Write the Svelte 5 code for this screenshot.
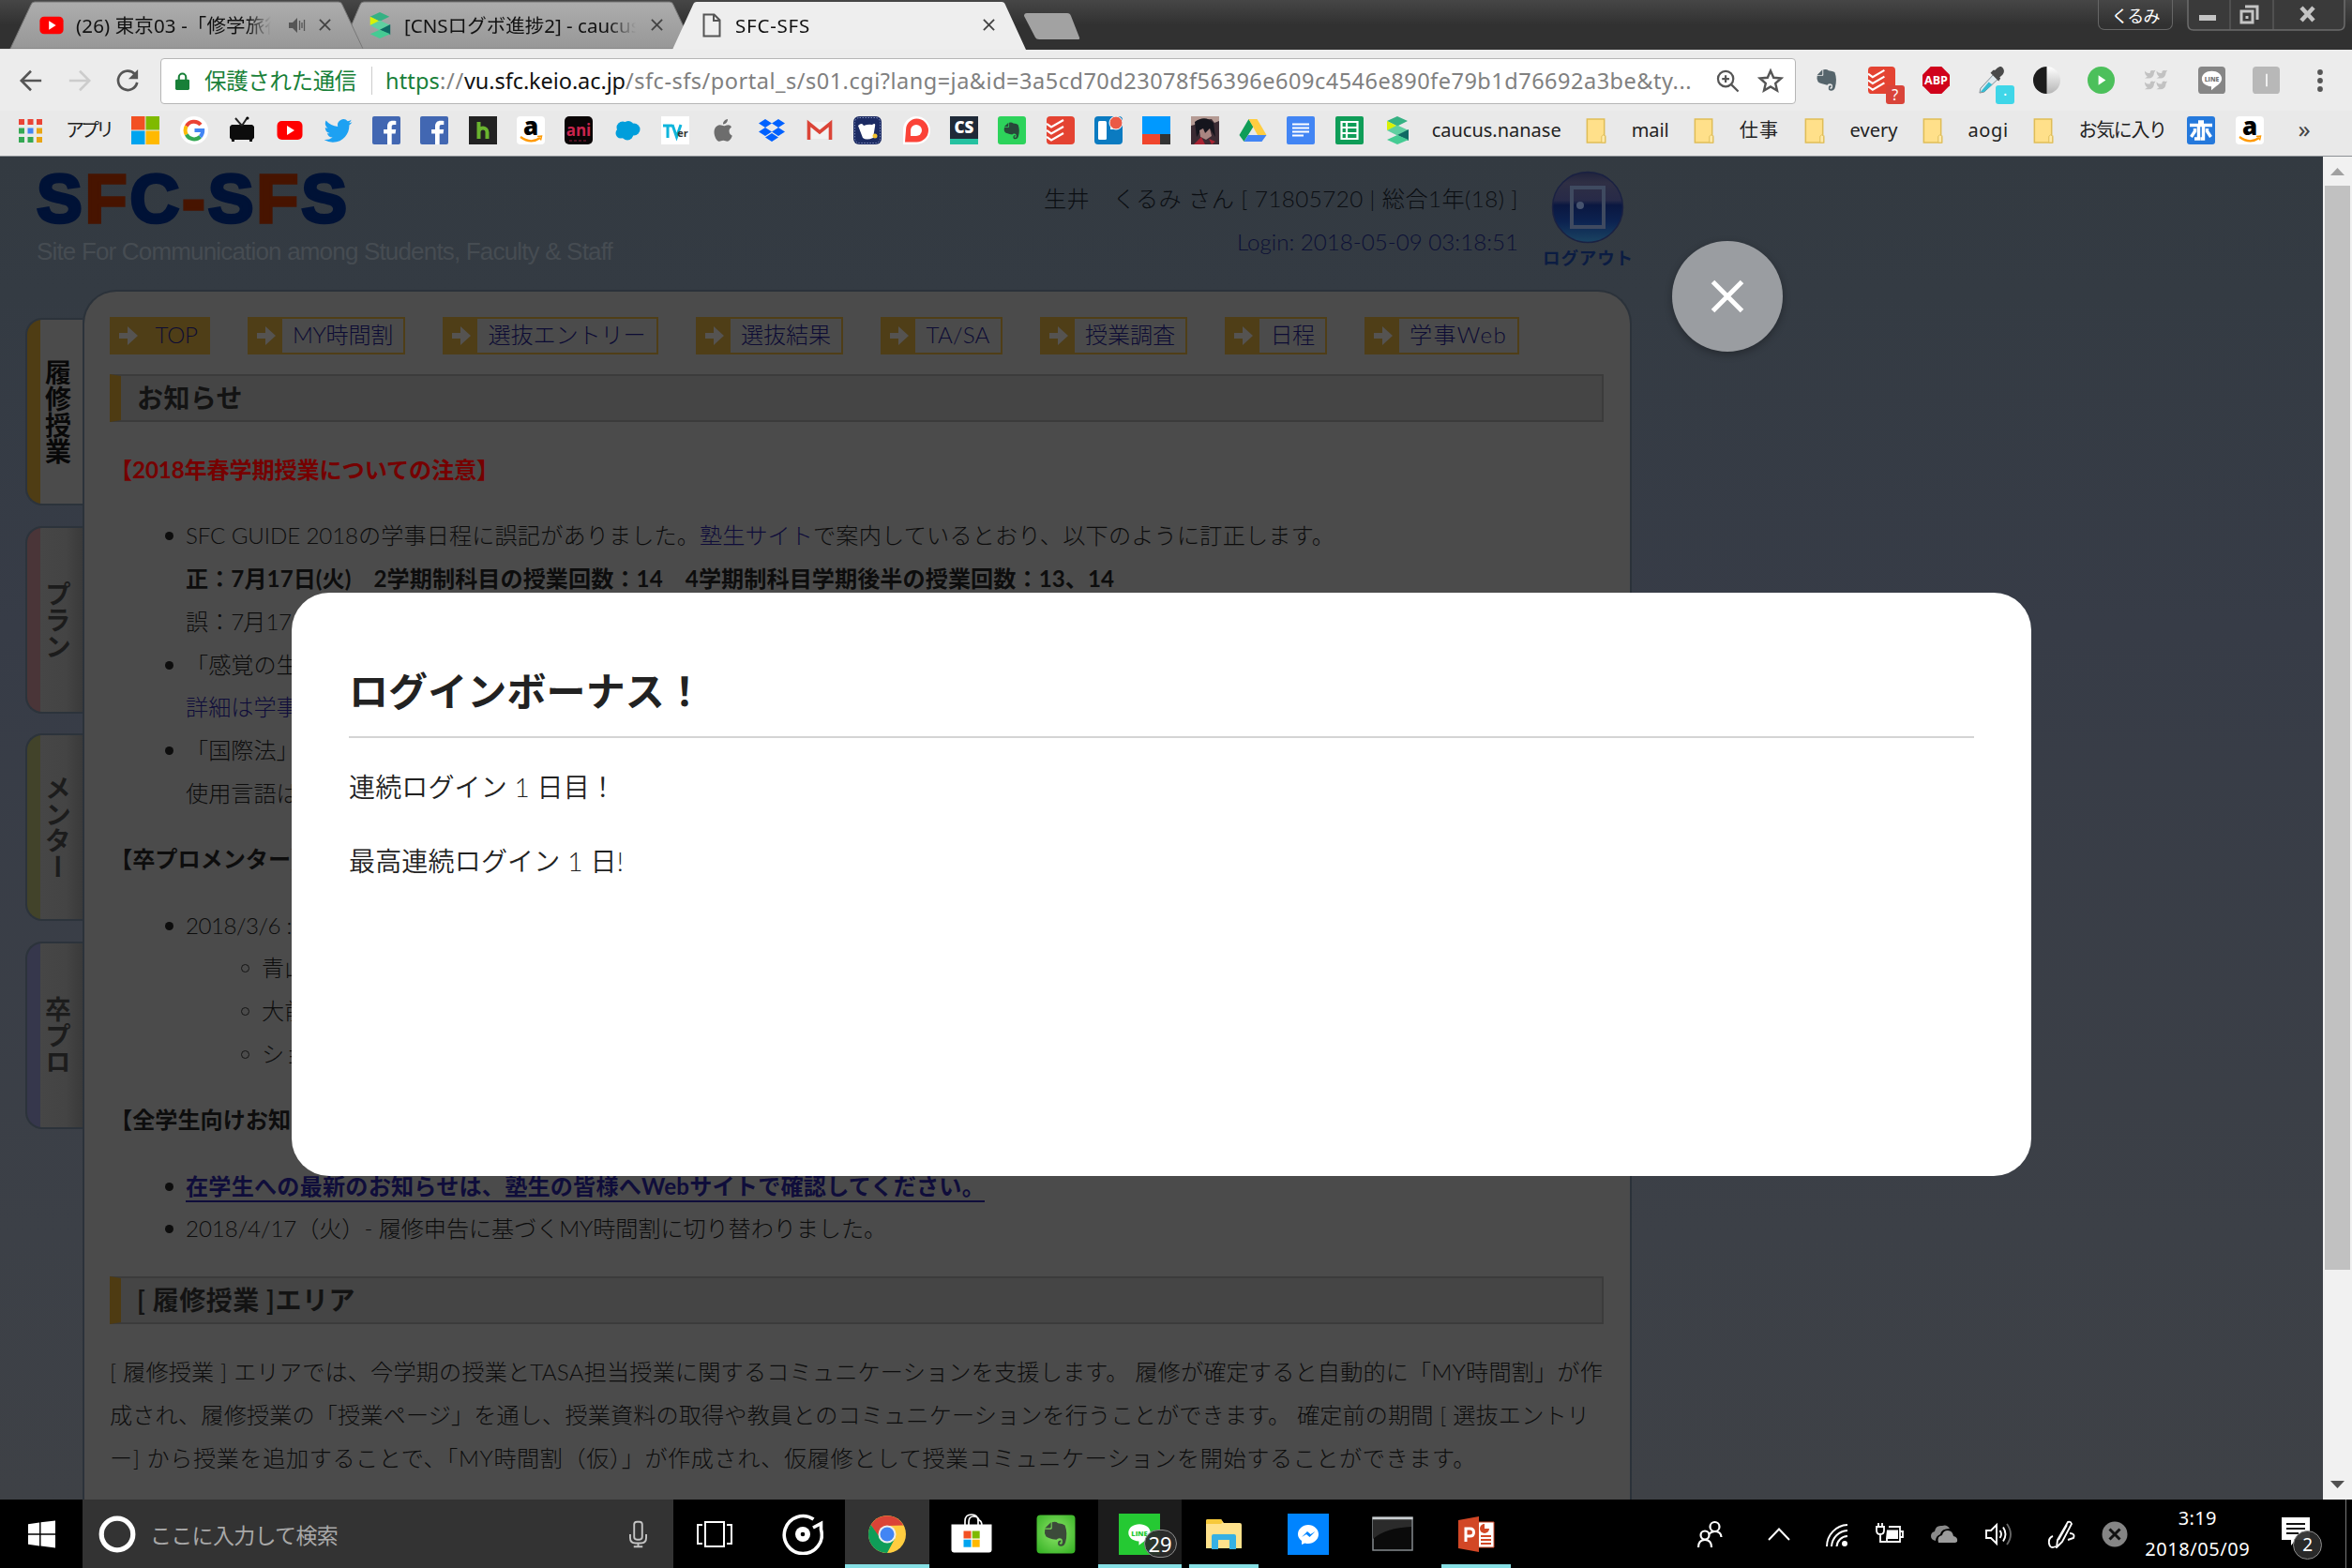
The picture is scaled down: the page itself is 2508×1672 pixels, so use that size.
<script>
  // Spreads the letters of a run so that it takes up the given width.
  function fit(node, width) {
    const natural = node.getBoundingClientRect().width;
    const count = [...node.textContent].length;
    node.style.letterSpacing = (width - natural) / count + 'px';
  }

  const bookmarkIcons = [
    'ms', 'google', 'tv', 'youtube', 'twitter', 'facebook', 'facebook', 'hatena', 'amazon', 'ani',
    'salesforce', 'tver', 'apple', 'dropbox', 'gmail', 'whale', 'pocket', 'cs', 'evernote', 'todoist',
    'trello', 'delicious', 'anime', 'drive', 'docs', 'sheets', 'scrap'
  ];
  // Lettering that sits on top of some of the icons, in icon units.
  const lettering = {
    amazon: { text: 'a', x: 15, y: 20, size: 26, weight: 800, fill: '#000' },
    ani: { text: 'ani', x: 15, y: 21, size: 17, weight: 700, fill: '#c9244e' },
    tver: { text: 'er', x: 23, y: 22, size: 11, weight: 700, fill: '#333' },
    cs: { text: 'CS', x: 15, y: 18, size: 17, weight: 800, fill: '#fff' },
    abp: { text: 'ABP', x: 15, y: 20, size: 13, weight: 700, fill: '#fff' },
    lineGrey: { text: 'LINE', x: 15, y: 16.5, size: 7, weight: 800, fill: '#777' },
    lineApp: { text: 'LINE', x: 22, y: 23.5, size: 7.5, weight: 800, fill: '#25c933' }
  };
  const folders = [
    { name: 'mail', width: 40 },
    { name: '仕事', width: 43 },
    { name: 'every', width: 51 },
    { name: 'aogi', width: 43 },
    { name: 'お気に入り', width: 93 }
  ];
  const extensions = ['elephant', 'todoist', 'abp', 'dropper', 'contrast', 'play', 'birds', 'lineGrey', 'bar'];
  const menu = [
    { name: 'TOP', width: 45, on: true },
    { name: 'MY時間割', width: 107 },
    { name: '選抜エントリー', width: 168 },
    { name: '選抜結果', width: 96 },
    { name: 'TA/SA', width: 68 },
    { name: '授業調査', width: 96 },
    { name: '日程', width: 47 },
    { name: '学事Web', width: 104 }
  ];
  const sideTabs = [
    { name: '履修授業', tone: 'gold' },
    { name: 'プラン', tone: 'pink' },
    { name: 'メンター', tone: 'olive' },
    { name: '卒プロ', tone: 'violet' }
  ];
  const apps = [
    { icon: 'groove' },
    { icon: 'chrome', state: 'active' },
    { icon: 'store' },
    { icon: 'evernoteBig' },
    { icon: 'lineApp', state: 'alert', badge: '29' },
    { icon: 'explorer', state: 'open' },
    { icon: 'messenger' },
    { icon: 'cmd' },
    { icon: 'ppt', state: 'open' }
  ];
  const tray = [
    { icon: 'people', width: 73 },
    { icon: 'chevron', width: 61.5 },
    { icon: 'wifi', width: 56.5 },
    { icon: 'battery', width: 58 },
    { icon: 'cloud', width: 59 },
    { icon: 'speaker', width: 66 },
    { icon: 'pen', width: 57 },
    { icon: 'stop', width: 47 }
  ];
</script>

{#snippet icon(name, box = 30)}
  <svg viewBox="0 0 {box} {box}">
    <use href="#{name}" />
    {#if lettering[name]}
      {@const l = lettering[name]}
      <text x={l.x} y={l.y} text-anchor="middle" font-family="Open Sans, sans-serif" font-weight={l.weight} font-size={l.size} fill={l.fill}>{l.text}</text>
    {/if}
  </svg>
{/snippet}

<svg class="defs" aria-hidden="true">
  <defs>
    <linearGradient id="gBall" x1="0" y1="0" x2="0" y2="1">
      <stop offset="0" stop-color="#20233d" /><stop offset=".15" stop-color="#2f2f44" /><stop offset=".4" stop-color="#272a48" />
      <stop offset=".47" stop-color="#0a1740" /><stop offset=".7" stop-color="#0c2250" /><stop offset="1" stop-color="#1a4462" />
    </linearGradient>
    <linearGradient id="gHalf" x1="0" y1="0" x2="0" y2="1">
      <stop offset="0" stop-color="#fff" /><stop offset="1" stop-color="#b5b5b5" />
    </linearGradient>
    <radialGradient id="gGreen" cx=".5" cy=".45" r=".75">
      <stop offset="0" stop-color="#8fe56a" /><stop offset="1" stop-color="#2fae1f" />
    </radialGradient>
  </defs>
  <symbol id="ms" viewBox="0 0 30 30"><path fill="#f25022" d="M0 0h14.500v14.500H0z" /><path fill="#7fba00" d="M15.500 0H30v14.500H15.500z" /><path fill="#00a4ef" d="M0 15.500h14.500V30H0z" /><path fill="#ffb900" d="M15.500 15.500H30V30H15.500z" /></symbol>
  <symbol id="google" viewBox="0 0 30 30"><circle cx="15" cy="15" r="15" fill="#fff" /><g fill="none" stroke-width="4"><path stroke="#ea4335" d="M22 9A9.300 9.300 0 0 0 6.800 10.500" /><path stroke="#fbbc05" d="M6.800 10.500a9.300 9.300 0 0 0 0 9" /><path stroke="#34a853" d="M6.800 19.500A9.300 9.300 0 0 0 21.500 21.700" /><path stroke="#4285f4" d="M21.500 21.700A9 9 0 0 0 24.200 15H15.500" /></g></symbol>
  <symbol id="tv" viewBox="0 0 30 30"><path d="M4 9h22l2 2v12l-2 2v2h-3v-2H7v2H4v-2l-2-2V11z" fill="#0c0c0c" /><path d="M15 10L8 2M15 10l6-9" stroke="#222" stroke-width="2" /><circle cx="21" cy="2" r="1.500" /></symbol>
  <symbol id="youtube" viewBox="0 0 30 30"><rect x="1.500" y="5" width="27" height="20" rx="5" fill="#f00" /><path d="M12 10l8 5-8 5z" fill="#fff" /></symbol>
  <symbol id="twitter" viewBox="0 0 24 24"><path fill="#1da1f2" d="M23.600 4.900a9.700 9.700 0 0 1-2.800.8 4.900 4.900 0 0 0 2.100-2.700c-.9.600-2 1-3.100 1.200a4.900 4.900 0 0 0-8.400 4.500A13.900 13.900 0 0 1 1.300 3.600a4.900 4.900 0 0 0 1.500 6.500c-.8 0-1.500-.2-2.200-.6v.1a4.900 4.900 0 0 0 3.900 4.800c-.7.200-1.500.2-2.200.1a4.900 4.900 0 0 0 4.600 3.400A9.900 9.900 0 0 1-.4 19.900a14 14 0 0 0 7.500 2.200c9.100 0 14-7.500 14-14v-.6c1-.7 1.800-1.600 2.500-2.600z" /></symbol>
  <symbol id="facebook" viewBox="0 0 30 30"><rect width="30" height="30" rx="2" fill="#4267b2" /><path fill="#fff" d="M20.700 30V18.500h3.900l.6-4.500h-4.500v-2.900c0-1.300.4-2.200 2.200-2.200h2.400v-4c-.4 0-1.800-.2-3.500-.2-3.500 0-5.800 2.100-5.800 6V14h-3.900v4.500H16V30z" /></symbol>
  <symbol id="hatena" viewBox="0 0 30 30"><rect width="30" height="30" fill="#222" /><path d="M10.500 6v18M10.500 17c0-6 9-6 9 0v7" fill="none" stroke="#6ab42f" stroke-width="4" /></symbol>
  <symbol id="amazon" viewBox="0 0 30 30"><rect width="30" height="30" rx="4" fill="#fff" /><path d="M4 22q11 8 21 1" fill="none" stroke="#f90" stroke-width="2.200" /><path d="M22 21.500l4.500-.5-1 4.500" fill="none" stroke="#f90" stroke-width="1.500" /></symbol>
  <symbol id="ani" viewBox="0 0 30 30"><rect width="30" height="30" rx="5" fill="#0a0506" /><path d="M5 26h20" stroke="#4d1020" stroke-width="2" stroke-dasharray="3 2" /></symbol>
  <symbol id="salesforce" viewBox="0 0 30 30"><g fill="#009edb"><circle cx="10" cy="12" r="6.500" /><circle cx="16" cy="11" r="6" /><circle cx="22" cy="14" r="6.500" /><circle cx="8" cy="18" r="5.500" /><circle cx="15" cy="19" r="6.500" /></g></symbol>
  <symbol id="tver" viewBox="0 0 30 30"><rect width="30" height="30" fill="#fff" /><path d="M2 10h10M7 10v13M12 9l4.500 13L21 9" fill="none" stroke="#0fb5dc" stroke-width="3" /></symbol>
  <symbol id="apple" viewBox="0 0 30 30"><path fill="#6d6d6d" d="M20 3c.2 3-2.500 5.800-5 5.500C14.800 5.800 17.300 3.300 20 3zM24 11.500c-3.800 2.300-3 7.800.8 9.200-1 2.900-3 6-5.300 6-1.600 0-2.200-1-4.200-1s-2.800 1-4.200 1C8 26.700 5.500 21 5.500 17c0-5 3.200-7.700 6.300-7.700 1.700 0 3 1 4.200 1 1 0 2.600-1.100 4.500-1.100 1.500 0 2.800.8 3.500 2.300z" /></symbol>
  <symbol id="dropbox" viewBox="0 0 30 30"><path fill="#0061ff" d="M8 3l7 4.500L8 12 1 7.500zM22 3l7 4.500L22 12l-7-4.500zM8 12l7 4.500L8 21l-7-4.500zM22 12l7 4.500L22 21l-7-4.500zM15 18l7 4.500-7 4.500-7-4.500z" /></symbol>
  <symbol id="gmail" viewBox="0 0 30 30"><path fill="#f2f2f2" d="M2 6h26v18H2z" /><path d="M3.500 25V7.500L15 17 26.500 7.500V25" fill="none" stroke="#db4437" stroke-width="3.600" /></symbol>
  <symbol id="whale" viewBox="0 0 30 30"><rect width="30" height="30" rx="6" fill="#1c2b63" /><rect x="1.500" y="1.500" width="27" height="27" rx="5" fill="none" stroke="#8390bd" stroke-dasharray="1.500 1.500" /><path d="M5 10q4-4 6 0 5-2 9-1 4-3 3 2l-2 12q-7 3-11 0z" fill="#fff" /><circle cx="23" cy="21" r="2.500" fill="#f2c230" /></symbol>
  <symbol id="pocket" viewBox="0 0 30 30"><path d="M15 0a15 15 0 0 1 0 30H1V15A14.500 14.500 0 0 1 15 0z" fill="#fff" /><path d="M15.500 2.500a12.500 12.500 0 0 1 0 25H3l1-12.500A12 12 0 0 1 15.500 2.500z" fill="#fb4338" /><path d="M15 9a6 6 0 0 1 0 12H9v-6a6 6 0 0 1 6-6z" fill="#fff" /></symbol>
  <symbol id="cs" viewBox="0 0 30 30"><rect width="30" height="30" fill="#1f2a38" /><rect y="24" width="30" height="6" fill="#25c1a0" /></symbol>
  <symbol id="trunk" viewBox="0 0 30 30"><path d="M4 9l6-6v5q0 1-1 1zM11 3q4-1 6 1 5 .5 7 2 3 8 .5 17-1 4-4.500 4t-3-3.500q0-2.500 3-2.500v2q-1.500 0-1.500 1t1.500 1q1.500 0 1.500-3t-3-3q-2 0-3 1.500Q7 19 5 17q-2-3-1-7h6q1 0 1-1z" /></symbol>
  <symbol id="evernote" viewBox="0 0 30 30"><rect width="30" height="30" rx="3" fill="#2dd35b" /><use href="#trunk" x="4" y="4" width="22" height="23" fill="#28483a" /></symbol>
  <symbol id="elephant" viewBox="0 0 30 30"><use href="#trunk" x="1" y="0" width="29" height="30" fill="#56656c" /></symbol>
  <symbol id="todoist" viewBox="0 0 30 30"><rect width="30" height="30" rx="4" fill="#e44332" /><path d="M0 8l5 3.500L18 4M0 15l5 3.500 13-7.500M0 22l5 3.500L18 18" fill="none" stroke="#fff" stroke-width="2.200" /></symbol>
  <symbol id="trello" viewBox="0 0 30 30"><rect width="30" height="30" rx="4" fill="#0b7bc1" /><rect x="4" y="5" width="9" height="20" rx="1.500" fill="#fff" /><path d="M17 5h9v9h-9z" fill="#fff" /><circle cx="23" cy="7" r="7" fill="#eb5a46" stroke="#fff" /></symbol>
  <symbol id="delicious" viewBox="0 0 30 30"><rect width="30" height="30" fill="#09f" /><path d="M0 19h19v11H0z" fill="#f0452c" /><path d="M19 19h11v11H19z" fill="#333" /></symbol>
  <symbol id="anime" viewBox="0 0 30 30"><rect width="30" height="30" fill="#3b2b33" /><path d="M0 0h30v5l-5 2-3-4-14 1-4 5-4 1z" fill="#b59b94" /><path d="M4 6q11-8 20 1l2 15-6-9-4 5-4-5-6 9z" fill="#15151d" /><path d="M9 15l4-2 2 5 5-5 2 8-6 4-6-3z" fill="#a98581" /><path d="M3 30l8-8 4 8zM22 30l-3-6 7 3z" fill="#a92332" /></symbol>
  <symbol id="drive" viewBox="0 0 30 30"><path d="M10.500 3L0.500 20l5 7 10-16z" fill="#0f9d58" /><path d="M10.500 3h9l10 17h-9.500z" fill="#ffcd40" /><path d="M10 20h19.500l-5 7h-19z" fill="#4285f4" /></symbol>
  <symbol id="docs" viewBox="0 0 30 30"><rect width="30" height="30" rx="2" fill="#4285f4" /><path d="M6 8.500h18M6 12.500h18M6 16.500h18M6 20.500h12" stroke="#fff" stroke-width="2" /></symbol>
  <symbol id="sheets" viewBox="0 0 30 30"><rect width="30" height="30" rx="2" fill="#0f9d58" /><path d="M6.500 6h17v18h-17zM6.500 12h17M6.500 18h17M12 6v18" fill="none" stroke="#fff" stroke-width="2.200" /></symbol>
  <symbol id="scrap" viewBox="0 0 30 30"><path d="M15 0l11 5-11 5.500L4 5z" fill="#35b183" /><path d="M4 5l11 5.500L4 15z" fill="#d7f205" /><path d="M4 15l11-5.500L27 15l-12 5.500z" fill="#5fcfa0" /><path d="M27 14v12l-12-6z" fill="#0f6a63" /><path d="M4 25l11-5 12 5-12 5z" fill="#45cb93" /></symbol>
  <symbol id="ho" viewBox="0 0 30 30"><rect width="30" height="30" rx="3" fill="#2579dc" /><path d="M3 9.500h24M12 6h6M12.500 9v15H8M17.500 9v15h-3M8.500 13v3l-4 6M21.500 13v3l4 6" fill="none" stroke="#fff" stroke-width="3.400" /></symbol>
  <symbol id="abp" viewBox="0 0 30 30"><path d="M9 0h12l9 9v12l-9 9H9l-9-9V9z" fill="#d0021b" /></symbol>
  <symbol id="dropper" viewBox="0 0 30 30"><path d="M17 9l5 5L7 28l-5 1 1-5z" fill="#dfe9ee" stroke="#7d8a90" /><path d="M12 17l4 3L7 28l-4 0z" fill="#35bcd2" /><path d="M14 7l9 9 2-3-1-1q7-5 4-10t-9 2l-2 0z" fill="#4a4a4a" /></symbol>
  <symbol id="contrast" viewBox="0 0 30 30"><circle cx="15" cy="15" r="15" fill="url(#gHalf)" /><path d="M15 0a15 15 0 0 0 0 30z" fill="#1c1c1c" /></symbol>
  <symbol id="play" viewBox="0 0 30 30"><circle cx="15" cy="15" r="15" fill="#4cc05b" /><path d="M12 9.500l8 5.500-8 5.500z" fill="#fff" /></symbol>
  <symbol id="birds" viewBox="0 0 30 30"><g fill="#c2c2c2"><path id="bird" d="M2 5q3 3 6 2 0-4 4-2.500L14 4l-1.500 2.500Q12 13 6 13H2l3-2q-3-2-3-6z" /><use href="#bird" x="13" /><use href="#bird" y="12" /><use href="#bird" x="13" y="12" /></g></symbol>
  <symbol id="bubble" viewBox="0 0 30 30"><path d="M15 5c6 0 11 3.500 11 8.500S19 22 14.500 26v-4C8 21.500 4 18 4 13.500 4 8.500 9 5 15 5z" fill="#fff" /></symbol>
  <symbol id="lineGrey" viewBox="0 0 30 30"><rect width="30" height="30" rx="4" fill="#868686" /><use href="#bubble" width="30" height="30" /></symbol>
  <symbol id="bar" viewBox="0 0 30 30"><rect width="30" height="30" rx="4" fill="#b8b8b8" /><path d="M15.500 8v14" stroke="#fff" stroke-width="1.600" /></symbol>

  <symbol id="groove" viewBox="0 0 44 44"><path d="M33.500 6A20 20 0 1 0 41.500 17V10.500L33 15" fill="none" stroke="#fff" stroke-width="3.600" /><circle cx="22" cy="22" r="8" fill="#fff" /><circle cx="22" cy="22" r="2.300" /></symbol>
  <symbol id="chrome" viewBox="0 0 44 44"><circle cx="22" cy="22" r="20" fill="#ffcd40" /><path d="M4.700 12A20 20 0 0 1 39.300 12.500L22 13l-8.500 13z" fill="#db4437" /><path d="M4.700 12A20 20 0 0 0 22 42l8-15-15.500-1z" fill="#0f9d58" /><circle cx="22" cy="22" r="9.500" fill="#eee" /><circle cx="22" cy="22" r="7.500" fill="#4285f4" /></symbol>
  <symbol id="store" viewBox="0 0 44 44"><path d="M15 13V8q0-7 7-7t7 7v5M19 13V9q0-6 5-6t6 4q3 1 3 6" fill="none" stroke="#fff" stroke-width="1.700" /><path d="M.5 11.500h43v27q0 3-3 3h-37q-3 0-3-3z" fill="#fff" /><path d="M13.500 18.500h8v8h-8z" fill="#f25022" /><path d="M22.700 18.500h8v8h-8z" fill="#7fba00" /><path d="M13.500 27.700h8v8h-8z" fill="#00a4ef" /><path d="M22.700 27.700h8v8h-8z" fill="#ffb900" /></symbol>
  <symbol id="evernoteBig" viewBox="0 0 44 44"><rect x="1.500" y="1.500" width="41" height="41" rx="4" fill="url(#gGreen)" /><use href="#trunk" x="6" y="6" width="32" height="32" fill="#3c4a3a" /></symbol>
  <symbol id="lineApp" viewBox="0 0 44 44"><rect width="44" height="44" fill="#25c933" /><use href="#bubble" x="6" y="5" width="32" height="34" /></symbol>
  <symbol id="explorer" viewBox="0 0 44 44"><path d="M3 8q0-2 2-2h14l3 4h17q2 0 2 2v25H3z" fill="#ffe28c" /><path d="M3 11V8q0-2 2-2h14l2 3-2 2z" fill="#f6c93b" /><path d="M9 38V24q0-2 2-2h22q2 0 2 2v14h-7V28H16v10z" fill="#36b0e4" /></symbol>
  <symbol id="messenger" viewBox="0 0 44 44"><rect width="44" height="44" fill="#0084ff" /><path d="M22 12c6 0 11 4.500 11 10s-5 10-11 10q-2 0-3.500-.5L15 33v-4q-4-3-4-7c0-5.500 5-10 11-10z" fill="#fff" /><path d="M15 25l6-6 3.500 3 5-3-6 6-3.500-3z" fill="#0084ff" /></symbol>
  <symbol id="cmd" viewBox="0 0 44 44"><rect x="1" y="4" width="42" height="35" fill="#0b0b0b" stroke="#858a8e" stroke-width="1.500" /><path d="M1 27Q15 15 42 14V6H1z" fill="#2b2b2b" /><path d="M.5 5h43" stroke="#c9cdd0" stroke-width="2.500" /></symbol>
  <symbol id="ppt" viewBox="0 0 44 44"><path d="M20 9h21v27H20z" fill="#fff" stroke="#d24726" stroke-width="1" /><path d="M27 24h11M27 28h11M27 32h11" stroke="#d24726" stroke-width="2" /><circle cx="31" cy="16" r="5" fill="#d24726" /><path d="M31 16v-6a6 6 0 0 1 6 6z" fill="#fff" /><path d="M3 7l22-4v38L3 37z" fill="#d24726" /><path d="M11 30V16h4.500q4 0 4 4t-4 4H11" fill="none" stroke="#fff" stroke-width="3" /></symbol>

  <symbol id="people" viewBox="0 0 30 30"><g fill="none" stroke="#fff" stroke-width="2.200"><circle cx="19.500" cy="7" r="5" /><circle cx="9" cy="16" r="4.500" /><path d="M2 29q0-8 7-8t7 8M13 15q3-3 6.500-3 6.500 0 7 6" /></g></symbol>
  <symbol id="chevron" viewBox="0 0 30 30"><path d="M4 21L15 9.500 26 21" fill="none" stroke="#fff" stroke-width="2" /></symbol>
  <symbol id="wifi" viewBox="0 0 30 30"><g fill="none" stroke="#fff" stroke-width="2"><path d="M4 28A23 23 0 0 1 26 5" /><path d="M9 28a18 18 0 0 1 17-17M14.500 28A12 12 0 0 1 26 17" /></g><circle cx="23" cy="25" r="3" fill="#fff" /></symbol>
  <symbol id="battery" viewBox="0 0 30 30"><path d="M14 7h12v16H12v-4M26 12h3v6h-3" fill="none" stroke="#fff" stroke-width="1.800" /><path d="M12 10.500h12v9.500H11z" fill="#fff" /><path d="M1 7h8v4q0 4-4 4t-4-4zM3 3v4M7 3v4M5 15v8h6" fill="none" stroke="#fff" stroke-width="1.800" /></symbol>
  <symbol id="cloud" viewBox="0 0 30 30"><path d="M6 22q-5-1-5-5t4-5q1-7 8-6 5-2 8 3-9 0-10 6-5 2-5 7z" fill="#8a8a8a" /><path d="M9 24q-2-7 4-8 1-5 6-5t6 6q5 1 4 6l-2 1z" fill="#9c9c9c" /></symbol>
  <symbol id="speaker" viewBox="0 0 30 30"><g fill="none" stroke="#fff" stroke-width="1.900"><path d="M1 11h5l6-6v20l-6-6H1zM15.500 11q3 4 0 8M19 7.500q5 7.500 0 15" /><path stroke="#666" d="M23 4q8 11 0 22" /></g></symbol>
  <symbol id="pen" viewBox="0 0 30 30"><g fill="none" stroke="#fff" stroke-width="1.900"><path d="M10 29l1-8L22 2q3-1 4 2L16 23zM21 5l-9 16M6 17q-5 2-4 8t7 3M24 14q6 0 4 5l-6 2" /></g></symbol>
  <symbol id="stop" viewBox="0 0 30 30"><circle cx="15" cy="15" r="13.500" fill="#858585" /><path d="M9.500 9.500l11 11M20.500 9.500l-11 11" stroke="#111" stroke-width="3" /></symbol>
</svg>

<div class="screen">
  <div class="tabstrip">
    <svg class="tabshapes" viewBox="0 0 1200 53">
      <defs><linearGradient id="gTab" x1="0" y1="0" x2="0" y2="1"><stop offset="0" stop-color="#adadad" /><stop offset="1" stop-color="#979797" /></linearGradient></defs>
      <path d="M364 52L384 5q1-3 4-3H714q3 0 4 3L740 52z" fill="url(#gTab)" stroke="#777" />
      <path d="M11 52L33 5q1-3 4-3H361q3 0 4 3L387 52z" fill="url(#gTab)" stroke="#777" />
      <path d="M1092 17q0-3 3-3h43q3 0 4 3l9 23q1 2-2 2h-41q-3 0-4-2z" fill="#a2a2a2" />
      <path d="M0 52.500H718" stroke="#e0e0e0" />
      <path d="M717 53L739 5q1-3 4-3H1068q3 0 4 3L1094 53z" fill="#eee" />
    </svg>
    <div class="tab t1">
      <svg class="fav"><use href="#youtube" /></svg>
      <span class="faded w1"><span class="run" use:fit={222}>(26) 東京03 -「修学旅行</span></span>
      <svg class="snd" viewBox="0 0 18 16"><path d="M0 5h4l5-5v16l-5-5H0z" fill="#555" /><path d="M11.500 3v10M14 5v6M16.500 2v12" stroke="#555" stroke-width="1.300" /></svg>
      <svg class="x" viewBox="0 0 14 14"><path d="M1 1l12 12M13 1L1 13" /></svg>
    </div>
    <div class="tab t2">
      <svg class="fav"><use href="#scrap" /></svg>
      <span class="faded w2"><span class="run" use:fit={257}>[CNSログボ進捗2] - caucus.</span></span>
      <svg class="x" viewBox="0 0 14 14"><path d="M1 1l12 12M13 1L1 13" /></svg>
    </div>
    <div class="tab t3">
      <svg class="page" viewBox="0 0 20 26"><path d="M1.500 1.500h11l6 6v17h-17zM12 1.500V8h6.500" fill="none" stroke="#555" stroke-width="2" /></svg>
      <span class="faded w3"><span class="run" use:fit={80}>SFC-SFS</span></span>
      <svg class="x" viewBox="0 0 14 14"><path d="M1 1l12 12M13 1L1 13" /></svg>
    </div>
    <div class="userbtn"><span class="run" use:fit={51}>くるみ</span></div>
    <svg class="winbtns" viewBox="0 0 170 33">
      <path d="M1 -4V26q0 6 6 6H162q6 0 6-6V-4" fill="#3a3a3a" stroke="#6c6c6c" stroke-width="1.500" />
      <path d="M46 0v32M92 0v32" stroke="#666" />
      <path d="M13 16h18v6H13z" fill="#c4c4c4" />
      <path d="M62 7h13v14M58 12h12v12H58z" fill="none" stroke="#c4c4c4" stroke-width="3" /><path d="M62.500 17h3v3h-3z" fill="#c4c4c4" />
      <path d="M122 8l13 14M135 8l-13 14" stroke="#c4c4c4" stroke-width="4.500" />
    </svg>
  </div>

  <div class="toolbar">
    <svg class="navbtn back" viewBox="0 0 28 28"><path d="M26 14H4M14 3L3 14l11 11" fill="none" stroke="#555" stroke-width="2.800" /></svg>
    <svg class="navbtn fwd" viewBox="0 0 28 28"><path d="M2 14h22M14 3l11 11-11 11" fill="none" stroke="#ccc" stroke-width="2.800" /></svg>
    <svg class="navbtn reload" viewBox="0 0 28 28"><path d="M22.500 6.500A11 11 0 1 0 25 16" fill="none" stroke="#555" stroke-width="2.900" /><path d="M26 1v11H15z" fill="#555" /></svg>
    <div class="address">
      <svg class="lock" viewBox="0 0 16 20"><path d="M4 9V5.500a4 4 0 0 1 8 0V9" fill="none" stroke="#188038" stroke-width="2.200" /><rect y="8" width="16" height="12" rx="1.500" fill="#188038" /></svg>
      <span class="secure run" use:fit={162}>保護された通信</span>
      <span class="url"><span class="run green" use:fit={58}>https</span><span class="run" use:fit={26}>://</span><span class="run black" use:fit={172}>vu.sfc.keio.ac.jp</span><span class="run" use:fit={1137}>/sfc-sfs/portal_s/s01.cgi?lang=ja&amp;id=3a5cd70d23078f56396e609c4546e890fe79b1d76692a3be&amp;ty...</span></span>
      <svg class="zoomicon" viewBox="0 0 26 26"><g fill="none" stroke="#555" stroke-width="2.300"><circle cx="10.500" cy="10.500" r="8.500" /><path d="M17 17l7.500 7.500M6.500 10.500h8M10.500 6.500v8" /></g></svg>
      <svg class="star" viewBox="0 0 28 28"><path d="M14 3.500l3.200 7.300 8 .7-6 5.300 1.800 7.700-7-4.100-7 4.100 1.800-7.700-6-5.300 8-.7z" fill="none" stroke="#555" stroke-width="2.400" /></svg>
    </div>
    <div class="exts">
      {#each extensions as ext, i}
        <div class="ext">
          {@render icon(ext)}
          {#if i === 1}<span class="mark crimson">?</span>{/if}
          {#if i === 3}<span class="mark cyan">·</span>{/if}
        </div>
      {/each}
    </div>
    <svg class="dots" viewBox="0 0 8 26"><circle cx="4" cy="4" r="2.900" /><circle cx="4" cy="13" r="2.900" /><circle cx="4" cy="22" r="2.900" /></svg>
  </div>

  <div class="bookmarks">
    <svg class="appsgrid" viewBox="0 0 25 25">
      <path fill="#ea4335" d="M0 0h6v6H0zM9.500 0h6v6h-6zM19 0h6v6h-6z" /><path fill="#34a853" d="M0 9.500h6v6H0zM0 19h6v6H0z" /><path fill="#4285f4" d="M9.500 9.500h6v6h-6z" /><path fill="#e8a514" d="M19 9.500h6v6h-6zM19 19h6v6h-6z" /><path fill="#34a853" d="M9.500 19h6v6h-6z" />
    </svg>
    <span class="appslabel"><span class="run" use:fit={48}>アプリ</span></span>
    {#each bookmarkIcons as name}
      <span class="cell">{@render icon(name)}</span>
    {/each}
    <span class="first run" use:fit={138}>caucus.nanase</span>
    {#each folders as folder}
      <svg class="folder" viewBox="0 0 22 28"><path d="M1 1h19v19l1 0v7H1z" fill="#ffe08a" stroke="#dfbd57" stroke-width="1.600" /><path d="M17 27v-7q2-3 4 0v7z" fill="#ffe9a8" stroke="#dfbd57" /></svg>
      <span class="run" use:fit={folder.width}>{folder.name}</span>
    {/each}
    <span class="tail">{@render icon('ho')}</span>
    <span class="tail">{@render icon('amazon')}</span>
    <span class="more">»</span>
  </div>

  <div class="view">
    <div class="site">
      <header>
        <div class="brand">
          <div class="logo"><span class="run" use:fit={334}>S<i>F</i>C<i>-</i>S<i>F</i>S</span></div>
          <div class="tagline"><span class="run" use:fit={614}>Site For Communication among Students, Faculty &amp; Staff</span></div>
        </div>
        <div class="who">
          <div><span class="run" use:fit={506}>生井　くるみ さん [ 71805720 | 総合1年(18) ]</span></div>
          <div class="login"><span class="run" use:fit={300}>Login: 2018-05-09 03:18:51</span></div>
        </div>
        <div class="logout">
          <svg viewBox="0 0 78 78"><circle cx="39" cy="39" r="37.500" fill="url(#gBall)" stroke="#1a2142" stroke-width="1.500" /><path d="M22 18h34v42H22z" fill="none" stroke="#3f4a60" stroke-width="4" /><circle cx="31" cy="37" r="4" fill="#46536e" /></svg>
          <span class="run" use:fit={97}>ログアウト</span>
        </div>
      </header>
      <div class="columns">
        <aside>
          {#each sideTabs as tab}
            <div class="side {tab.tone}"><span>{tab.name}</span></div>
          {/each}
        </aside>
        <main>
          <nav>
            {#each menu as item}
              <div class="btn" class:on={item.on}>
                <svg viewBox="0 0 37 40"><path d="M10 17h9v-7l11 10-11 10v-7h-9z" /></svg>
                <span class="run" use:fit={item.width}>{item.name}</span>
              </div>
            {/each}
          </nav>
          <h2><span class="run" use:fit={113}>お知らせ</span></h2>
          <h3 class="red"><span class="run" use:fit={415}>【2018年春学期授業についての注意】</span></h3>
          <ul>
            <li>
              <div class="line"><span class="run" use:fit={184}>SFC GUIDE 2018</span><span class="run" use:fit={364}>の学事日程に誤記がありました。</span><span class="run link" use:fit={121}>塾生サイト</span><span class="run" use:fit={556}>で案内しているとおり、以下のように訂正します。</span></div>
              <div class="line"><b class="run" use:fit={990}>正：7月17日(火)　2学期制科目の授業回数：14　4学期制科目学期後半の授業回数：13、14</b></div>
              <div class="line"><span class="run">誤：</span><span class="run" use:fit={13}>7</span><span class="run">月</span><span class="run" use:fit={27}>17</span></div>
            </li>
            <li><div class="line">「感覚の生</div><div class="line link">詳細は学事</div></li>
            <li><div class="line">「国際法」</div><div class="line">使用言語は</div></li>
          </ul>
          <h3>【卒プロメンター】</h3>
          <ul>
            <li><div class="line"><span class="run" use:fit={101}>2018/3/6</span> :</div>
              <ul>
                <li><div class="line">青山</div></li>
                <li><div class="line">大前</div></li>
                <li><div class="line">ショ</div></li>
              </ul>
            </li>
          </ul>
          <h3>【全学生向けお知らせ】</h3>
          <ul>
            <li><div class="line"><b class="run link under" use:fit={852}>在学生への最新のお知らせは、塾生の皆様へWebサイトで確認してください。</b></div></li>
            <li><div class="line"><span class="run" use:fit={747}>2018/4/17（火）- 履修申告に基づくMY時間割に切り替わりました。</span></div></li>
          </ul>
          <h2 class="second"><span class="run" use:fit={233}>[ 履修授業 ]エリア</span></h2>
          <section>
            <div class="line"><span class="run" use:fit={1592}>[ 履修授業 ] エリアでは、今学期の授業とTASA担当授業に関するコミュニケーションを支援します。 履修が確定すると自動的に「MY時間割」が作</span></div>
            <div class="line"><span class="run" use:fit={1578}>成され、履修授業の「授業ページ」を通し、授業資料の取得や教員とのコミュニケーションを行うことができます。 確定前の期間 [ 選抜エントリ</span></div>
            <div class="line"><span class="run" use:fit={1457}>ー] から授業を追加することで、「MY時間割（仮）」が作成され、仮履修として授業コミュニケーションを開始することができます。</span></div>
          </section>
        </main>
      </div>
      <div class="modal">
        <h1><span class="run" use:fit={379}>ログインボーナス！</span></h1>
        <div><span class="run" use:fit={285}>連続ログイン 1 日目！</span></div>
        <div><span class="run" use:fit={293}>最高連続ログイン 1 日!</span></div>
      </div>
      <div class="close"><svg viewBox="0 0 36 36"><path d="M2.500 2.500l31 31M33.500 2.500l-31 31" /></svg></div>
    </div>
    <div class="scroll">
      <svg viewBox="0 0 31 31"><path d="M8 20l7.500-8 7.500 8z" fill="#a0a0a0" /></svg>
      <div class="thumb"></div>
      <svg viewBox="0 0 31 31"><path d="M8 11l7.500 8 7.500-8z" fill="#505050" /></svg>
    </div>
  </div>

  <div class="taskbar">
    <div class="start"><svg viewBox="0 0 30 30"><path d="M0 4l12.500-2v12.300H0zM14 1.800L30 0v14.300H14zM0 15.700h12.500V28L0 26zM14 15.700h16V30l-16-2z" fill="#fff" /></svg></div>
    <div class="search">
      <svg class="ring" viewBox="0 0 40 40"><circle cx="20" cy="20" r="16" fill="none" stroke="#fff" stroke-width="5" /></svg>
      <span class="hint"><span class="run" use:fit={200}>ここに入力して検索</span></span>
      <svg class="mic" viewBox="0 0 20 30"><g fill="none" stroke="#c4c4c4" stroke-width="2"><rect x="5.500" y="1" width="9" height="20" rx="3" /><path d="M1 15v4q0 6 6 6h6q6 0 6-6v-4M10 25v4M5 29h10" /></g></svg>
    </div>
    <div class="taskview"><svg viewBox="0 0 38 28"><g fill="none" stroke="#fff" stroke-width="2"><rect x="9" y="1" width="20" height="26" /><path d="M6 4H1v20h5M32 4h5v20h-5" /></g></svg></div>
    {#each apps as app}
      <div class="app {app.state ?? ''}">
        {@render icon(app.icon, 44)}
        {#if app.badge}<span class="badge">{app.badge}</span>{/if}
      </div>
    {/each}
    <div class="tray">
      {#each tray as t}
        <span class="trayitem" style:width="{t.width}px">{@render icon(t.icon)}</span>
      {/each}
    </div>
    <div class="clock">
      <div><span class="run" use:fit={41}>3:19</span></div>
      <div><span class="run" use:fit={112}>2018/05/09</span></div>
    </div>
    <div class="note">
      <svg viewBox="0 0 30 30"><path d="M0 0h30v24H15l-5 6v-6H0z" fill="#fff" /><path d="M5 7h20M5 12h20M5 17h13" stroke="#111" stroke-width="2" /></svg>
      <span class="badge two">2</span>
    </div>
    <div class="peek"></div>
  </div>
</div>

<style>
  :global(body) { margin: 0; overflow: hidden; }
  .screen {
    width: 2508px; height: 1672px; overflow: hidden; display: flex; flex-direction: column;
    font-family: 'Noto Sans', 'Noto Sans CJK JP', sans-serif; color: #222;
  }
  .defs { position: absolute; width: 0; height: 0; }
  .run { display: inline-block; white-space: pre; }
  svg { display: block; flex: none; }

  .tabstrip { position: relative; height: 53px; flex: none; display: flex; background: linear-gradient(#464646, #313131 50%); box-sizing: border-box; }
  .tabshapes { position: absolute; left: 0; top: 0; width: 1200px; height: 53px; }
  .tab { position: relative; display: flex; align-items: center; height: 53px; font-size: 20.500px; line-height: 30px; color: #111; }
  .t1 { width: 312px; padding-left: 41px; }
  .t2 { width: 318px; padding-left: 38px; }
  .t3 { width: 344px; padding-left: 40px; }
  .fav { width: 28px; height: 28px; }
  .page { width: 20px; height: 26px; }
  .faded { overflow: hidden; white-space: nowrap; margin-left: 12px; -webkit-mask-image: linear-gradient(90deg, #000 88%, transparent); mask-image: linear-gradient(90deg, #000 88%, transparent); }
  .w1 { width: 209px; margin-right: 19px; }
  .w2 { width: 247px; margin-right: 16px; }
  .w3 { width: 250px; margin-left: 15px; margin-right: 14px; }
  .snd { width: 18px; height: 16px; margin-right: 14px; }
  .x { width: 13px; height: 13px; stroke: #444; stroke-width: 2; }
  .userbtn { margin-left: auto; width: 80px; height: 32px; margin-right: 15px; box-sizing: border-box; border: 1.500px solid #666; border-top: 0; border-radius: 0 0 7px 7px; color: #fff; font-size: 18px; line-height: 34px; text-align: center; }
  .winbtns { width: 170px; height: 33px; margin-right: 6px; }

  .toolbar { height: 65px; flex: none; background: #ececec; display: flex; align-items: center; padding-left: 20px; box-sizing: border-box; }
  .navbtn { width: 26px; height: 26px; }
  .fwd { margin-left: 26px; }
  .reload { margin-left: 25px; }
  .address { margin-left: 22px; width: 1744px; height: 49px; box-sizing: border-box; border: 1.500px solid #b6b6b6; border-radius: 4px; background: #fff; display: flex; align-items: center; font-size: 23.500px; line-height: 34px; margin-top: 1px; }
  .lock { width: 15px; height: 21px; margin-left: 15px; }
  .secure { margin-left: 16px; color: #188038; }
  .url { margin-left: 16px; padding-left: 14px; border-left: 1.500px solid #ccc; height: 30px; line-height: 30px; white-space: nowrap; color: #808080; width: 1397px; }
  .green { color: #188038; }
  .black { color: #111; }
  .zoomicon { width: 25px; height: 25px; margin-left: 22px; }
  .star { width: 28px; height: 28px; margin-left: 19px; }
  .exts { display: flex; margin-left: 3px; }
  .ext { position: relative; width: 58.700px; display: flex; justify-content: center; }
  .ext > :global(svg) { width: 29px; height: 29px; }
  .mark { position: absolute; left: 34px; top: 20px; width: 20px; height: 20px; border-radius: 3px; color: #fff; font-size: 16px; line-height: 20px; text-align: center; }
  .crimson { background: #d9443a; }
  .cyan { background: #3fd6e8; }
  .dots { width: 8px; height: 26px; margin-left: 24px; fill: #555; }

  .bookmarks { height: 49px; flex: none; background: #e9e9e9; display: flex; align-items: center; padding-left: 20px; box-sizing: border-box; border-bottom: 1.500px solid #8b9094; padding-bottom: 6px; font-size: 20px; line-height: 30px; }
  .appsgrid { width: 25px; height: 25px; }
  .appslabel { width: 84.800px; box-sizing: border-box; padding-left: 25px; white-space: nowrap; }
  .cell { width: 51.330px; display: flex; justify-content: center; flex: none; }
  .cell > :global(svg), .tail > :global(svg) { width: 30px; height: 30px; }
  .first { margin-left: 11px; }
  .folder { width: 22px; height: 27px; margin: 0 26.300px 0 26.700px; }
  .tail { margin-left: 22px; }
  .more { margin-left: 37px; font-size: 26px; color: #444; padding-bottom: 4px; }

  .view { height: 1432px; flex: none; display: flex; }
  .site { position: relative; width: 2477px; height: 1432px; overflow: hidden; background: linear-gradient(#333a41, #343b43 10%, #373c47 35%, #3c4047 80%, #3e4146); font-family: Lato, 'Noto Sans CJK JP', sans-serif; font-weight: 300; font-size: 24.150px; line-height: 45.800px; color: #0d0d0d; }
  header { height: 142px; display: flex; }
  .brand { width: 1000px; padding-left: 39px; box-sizing: border-box; font-family: 'Liberation Sans', sans-serif; }
  .logo { height: 84px; font-size: 73px; line-height: 90px; font-weight: bold; color: #001236; -webkit-text-stroke: 3.500px #001236; }
  .logo i { font-style: normal; color: #471400; -webkit-text-stroke: 3.500px #471400; }
  .tagline { font-size: 26px; line-height: 35px; color: #464c52; font-weight: 400; }
  .who { width: 619px; text-align: right; padding-top: 22px; color: #0b0e12; }
  .login { color: #0c1036; }
  .logout { margin-left: 26px; width: 97px; padding-top: 15px; font-weight: 700; font-size: 18.500px; line-height: 31px; color: #0b1c42; }
  .logout svg { width: 78px; height: 78px; margin-left: 9px; }
  .columns { display: flex; height: 1290px; }
  aside { width: 88px; box-sizing: border-box; padding: 30px 0 0 27px; display: flex; flex-direction: column; gap: 21.500px; }
  .side { height: 200px; box-sizing: border-box; border: 2px solid #2c333b; border-right: 0; border-radius: 18px 0 0 18px; display: flex; align-items: center; justify-content: center; padding-left: 17px; writing-mode: vertical-rl; font-weight: 700; font-size: 28px; line-height: 44px; color: #1c1c1c; }
  .side span { margin-left: -12px; }
  .gold { background: linear-gradient(90deg, #4f3d14 14px, #4b4b4b 14px); color: #080808; }
  .pink { background: linear-gradient(90deg, #4a3538 14px, #464646 14px, #444 70%, #3a3a3a); }
  .olive { background: linear-gradient(90deg, #42432a 14px, #464646 14px, #444 70%, #3a3a3a); }
  .violet { background: linear-gradient(90deg, #36374c 14px, #464646 14px, #444 70%, #3a3a3a); }
  main { width: 1652px; box-sizing: border-box; border: 2px solid #2b323a; border-bottom: 0; border-radius: 36px 36px 0 0; background: #4b4b4b; padding: 27px 28px 0 27px; }
  nav { display: flex; gap: 40px; height: 40px; white-space: nowrap; }
  .btn { display: flex; box-sizing: border-box; height: 40px; border: 2px solid #4f3e17; padding-right: 11px; line-height: 34px; color: #0d0c34; }
  .btn svg { width: 37px; height: 40px; margin: -2px 11.500px 0 -2px; background: #4f3e17; fill: #555351; }
  .on { background: #4f3e17; }
  h2 { margin: 21px 0 0; height: 51px; box-sizing: border-box; border: 2px solid #3b3b3b; border-left: 12px solid #4e3b12; background: #454545; padding-left: 17px; font-size: 28px; line-height: 46px; font-weight: 700; color: #131313; }
  h3 { margin: 28px 0 0; height: 45.800px; font-size: 24.150px; line-height: 45.800px; font-weight: 700; }
  h3.red { color: #760000; }
  ul { margin: 24.500px 0 0; padding: 0 0 0 81px; list-style: none; white-space: nowrap; }
  ul + h3 { margin-top: 24.500px; }
  li { position: relative; }
  .line { height: 45.800px; white-space: nowrap; }
  li::before { content: ''; position: absolute; left: -22px; top: 19px; width: 9px; height: 9px; border-radius: 50%; background: #0d0d0d; }
  ul ul { margin: 0; }
  ul ul li::before { box-sizing: border-box; border: 1.500px solid #151515; background: none; }
  .link { color: #0f0d3a; }
  b { font-weight: 700; }
  .under { line-height: 35px; box-shadow: inset 0 -2px #0f0d3a; }
  .second { margin-top: 27.500px; }
  section { margin-top: 28.500px; }

  .modal { position: absolute; left: 311px; top: 465px; width: 1855px; height: 622px; box-sizing: border-box; border-radius: 40px; background: #fff; padding: 72px 61px 0; color: #222; font-size: 28px; line-height: 79px; font-weight: 350; }
  h1 { margin: 0 0 13px; height: 83px; box-sizing: border-box; border-bottom: 2.500px solid #d4d4d4; font-size: 42px; line-height: 66px; font-weight: 700; }
  .close { position: absolute; left: 1783px; top: 90px; width: 118px; height: 118px; border-radius: 50%; background: #9a9da1; box-shadow: 0 3px 9px rgba(0, 0, 0, .3); display: flex; align-items: center; justify-content: center; }
  .close svg { width: 36px; height: 36px; stroke: #fff; stroke-width: 5; }

  .scroll { width: 31px; background: #f1f1f1; display: flex; flex-direction: column; }
  .scroll svg { width: 31px; height: 31px; }
  .thumb { width: 27px; height: 1156px; margin: 0 2px 214px; background: #c1c1c1; }

  .taskbar { height: 73px; flex: none; background: #000; display: flex; align-items: stretch; color: #fff; }
  .taskbar > div { display: flex; align-items: center; flex: none; }
  .start { width: 88px; justify-content: center; }
  .start svg { width: 29px; height: 30px; }
  .search { width: 630px; background: #333; color: #a8a8a8; font-size: 23px; }
  .ring { width: 42px; height: 42px; margin-left: 16px; }
  .hint { margin-left: 14px; width: 511px; }
  .mic { width: 19px; height: 30px; }
  .taskview { width: 93.500px; padding-left: 25px; box-sizing: border-box; }
  .taskview svg { width: 38px; height: 28px; }
  .app { position: relative; width: 89.750px; justify-content: center; }
  .app > :global(svg) { width: 44px; height: 44px; }
  .active { background: #333; box-shadow: inset 0 -4px #86dfe4; }
  .alert { background: #1c1c1c; box-shadow: inset 0 -4px #86dfe4; }
  .open { background: linear-gradient(#86dfe4, #86dfe4) center bottom / 74px 4px no-repeat; }
  .badge { position: absolute; left: 49px; top: 32px; width: 33px; height: 28px; border-radius: 16px; border: 1.500px solid #8d8d8d; background: #2c2c2cee; font-size: 22px; line-height: 28px; text-align: center; box-sizing: content-box; }
  .tray { margin-left: 190px; }
  .trayitem { display: flex; }
  .trayitem > :global(svg) { width: 30px; height: 30px; }
  .taskbar .clock { width: 112px; flex-direction: column; justify-content: center; gap: 1px; font-size: 20px; line-height: 32px; }
  .note { position: relative; margin-left: 34px; }
  .note svg { width: 30px; height: 30px; margin-top: -6px; }
  .two { left: 12px; top: 33px; width: 29px; height: 29px; line-height: 29px; font-size: 19px; }
  .taskbar .peek { margin-left: auto; margin-right: 6px; border-left: 1.500px solid #777; }
</style>
